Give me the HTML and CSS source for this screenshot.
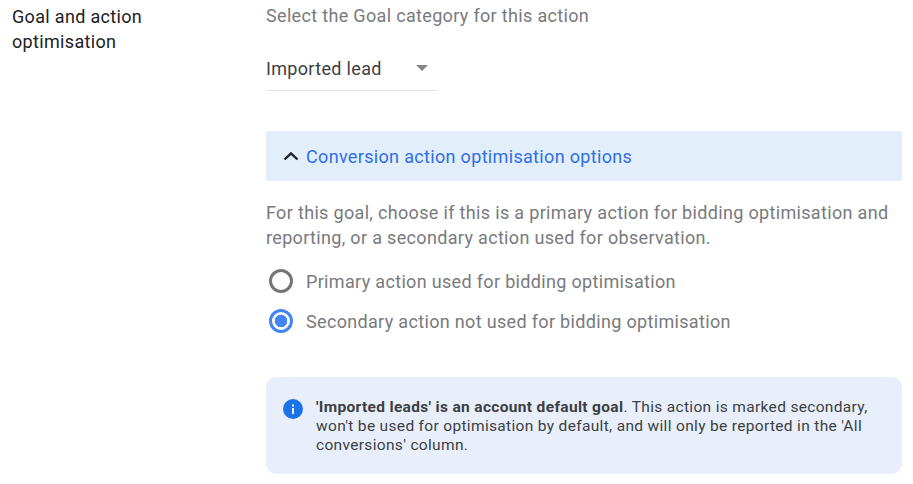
FILE: index.html
```html
<!DOCTYPE html>
<html lang="en">
<head>
  <meta charset="UTF-8" />
  <title>Goal and action optimisation</title>
  <link rel="stylesheet" href="styles.css">
</head>
<body>
  <div class="section">
    <div class="section-label">Goal and action optimisation</div>
    <div class="section-body">
      <div class="hint">Select the Goal category for this action</div>
      <div class="dropdown">
        <span>Imported lead</span>
        <span class="dropdown-arrow"></span>
      </div>
      <div class="panel-header">
        <svg class="chevron" width="16" height="10" viewBox="0 0 16 10"><path d="M1.500 8.500 8 2.300l6.500 6.200" fill="none" stroke="#202124" stroke-width="2.400"/></svg>
        <span>Conversion action optimisation options</span>
      </div>
      <p class="description">For this goal, choose if this is a primary action for bidding optimisation and reporting, or a secondary action used for observation.</p>
      <div class="radio-row">
        <span class="radio"></span>
        <span>Primary action used for bidding optimisation</span>
      </div>
      <div class="radio-row">
        <span class="radio checked"></span>
        <span>Secondary action not used for bidding optimisation</span>
      </div>
      <div class="notice">
        <svg class="info-icon" width="20" height="20" viewBox="0 0 20 20"><circle cx="10" cy="10" r="10" fill="#1a73e8"/><rect x="9" y="9" width="2" height="6" fill="#fff"/><rect x="9" y="5.500" width="2" height="2" fill="#fff"/></svg>
        <p><b>'Imported leads' is an account default goal</b>. This action is marked secondary, won't be used for optimisation by default, and will only be reported in the 'All conversions' column.</p>
      </div>
    </div>
  </div>
</body>
</html>
```
FILE: styles.css
```css
body {
  margin: 0;
  background: #fff;
  font-family: Roboto, sans-serif;
  letter-spacing: 0.33px;
  overflow: hidden;
}
.section {
  display: flex;
}
.section-label {
  width: 170px;
  margin-left: 12px;
  margin-right: 84px;
  padding-top: 4px;
  font-size: 18px;
  line-height: 25px;
  color: #202124;
}
.section-body {
  width: 636px;
  padding-top: 4px;
}
.hint {
  font-size: 18px;
  line-height: 24px;
  color: #787a7d;
}
.dropdown {
  display: flex;
  justify-content: space-between;
  align-items: center;
  width: 172px;
  height: 44px;
  margin-top: 18px;
  border-bottom: 1px solid #e0e0e6;
  font-size: 18px;
  color: #3c4043;
}
.dropdown-arrow {
  width: 0;
  height: 0;
  margin-right: 10px;
  border-left: 6px solid transparent;
  border-right: 6px solid transparent;
  border-top: 6px solid #80868b;
}
.panel-header {
  display: flex;
  align-items: center;
  height: 50px;
  margin-top: 40px;
  padding-left: 17px;
  gap: 7px;
  background: #e3eefb;
  border-radius: 2px;
  font-size: 18px;
  color: #2f6fe4;
}
.description {
  margin: 19px 0 0;
  font-size: 18px;
  line-height: 25px;
  color: #787a7d;
}
.radio-row {
  display: flex;
  align-items: center;
  gap: 13px;
  height: 40px;
  padding-left: 3px;
  font-size: 18px;
  color: #787a7d;
}
.description + .radio-row {
  margin-top: 11px;
}
.radio {
  width: 24px;
  height: 24px;
  box-sizing: border-box;
  border: 3px solid #757575;
  border-radius: 50%;
}
.radio.checked {
  border-color: #4285f4;
  background: radial-gradient(circle, #4285f4 0 6px, #fff 6.500px);
}
.notice {
  display: flex;
  gap: 13px;
  height: 97px;
  box-sizing: border-box;
  margin-top: 36px;
  padding: 21px 17px;
  background: #e8effb;
  border-radius: 10px;
}
.info-icon {
  flex: none;
  margin-top: 1px;
}
.notice p {
  margin: 0;
  font-size: 15.500px;
  line-height: 19px;
  color: #3c4043;
}
```
